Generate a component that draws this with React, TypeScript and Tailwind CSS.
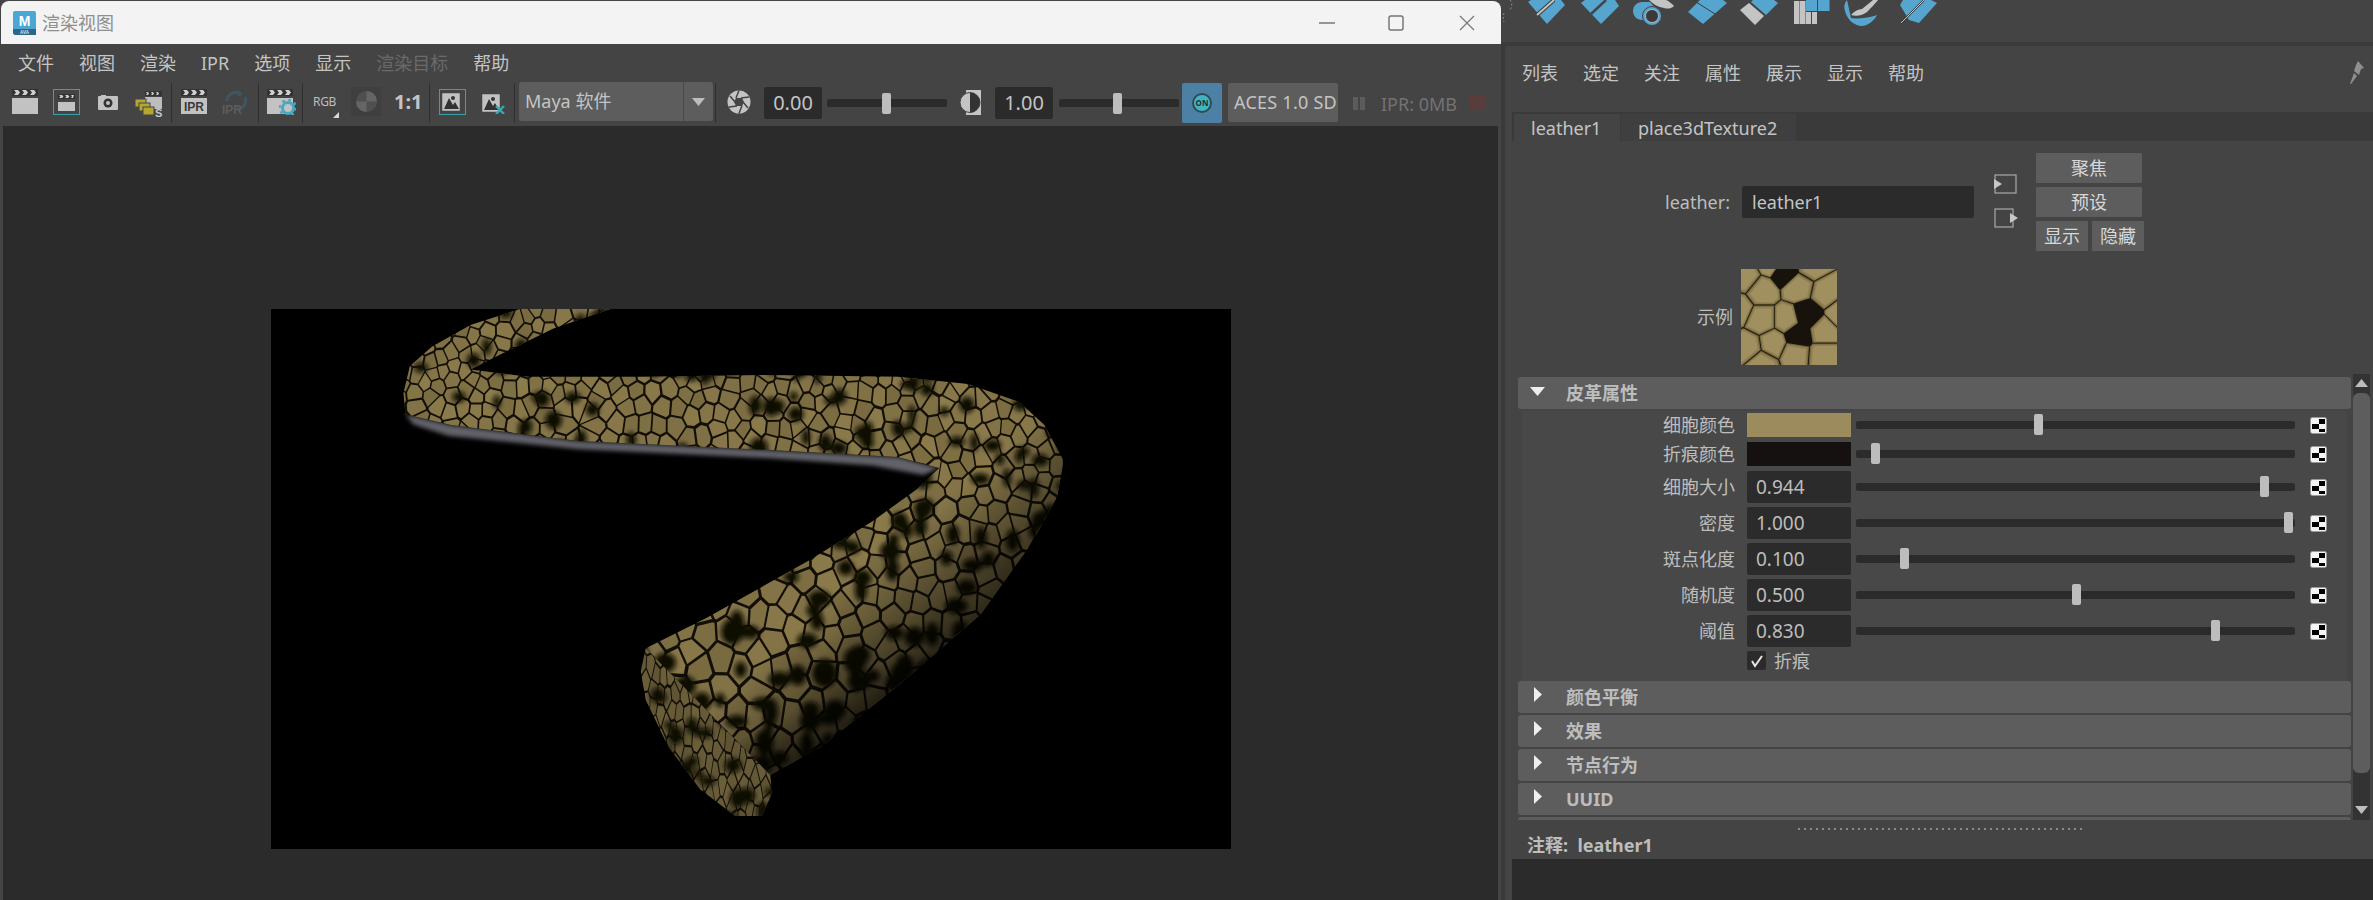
import React from "react";

type P = [number, number];

function rng(seed: number) {
  let s = seed >>> 0;
  return () => {
    s = (s + 0x6d2b79f5) >>> 0;
    let t = s;
    t = Math.imul(t ^ (t >>> 15), t | 1);
    t ^= t + Math.imul(t ^ (t >>> 7), t | 61);
    return ((t ^ (t >>> 14)) >>> 0) / 4294967296;
  };
}

function clipHalf(poly: P[], a: P, b: P): P[] {
  const mx = (a[0] + b[0]) / 2, my = (a[1] + b[1]) / 2;
  const nx = b[0] - a[0], ny = b[1] - a[1];
  const out: P[] = [];
  for (let i = 0; i < poly.length; i++) {
    const p = poly[i], q = poly[(i + 1) % poly.length];
    const dp = (p[0] - mx) * nx + (p[1] - my) * ny;
    const dq = (q[0] - mx) * nx + (q[1] - my) * ny;
    if (dp <= 0) out.push(p);
    if ((dp < 0 && dq > 0) || (dp > 0 && dq < 0)) {
      const t = dp / (dp - dq);
      out.push([p[0] + (q[0] - p[0]) * t, p[1] + (q[1] - p[1]) * t]);
    }
  }
  return out;
}

function voronoi(pts: P[], box: [number, number, number, number], reach: number): P[][] {
  return pts.map((p) => {
    let poly: P[] = [[box[0], box[1]], [box[2], box[1]], [box[2], box[3]], [box[0], box[3]]];
    for (const q of pts) {
      if (q === p) continue;
      if (Math.abs(q[0] - p[0]) > reach || Math.abs(q[1] - p[1]) > reach) continue;
      poly = clipHalf(poly, p, q);
      if (poly.length === 0) break;
    }
    return poly;
  });
}

const z = (x: number, y: number): P => [x / 1.568 - 11, y / 2.8 - 9];
const toStr = (pts: P[]) => pts.map((p) => `${p[0].toFixed(1)},${p[1].toFixed(1)}`).join(" ");

const BODY: P[] = [
  z(550, 25), z(460, 80), z(380, 150), z(330, 195), z(420, 215), z(600, 215), z(800, 210), z(1000, 215),
  z(1110, 235), z(1190, 285), z(1230, 350), z(1260, 450), z(1250, 550), z(1210, 680), z(1130, 880),
  z(1000, 1080), z(880, 1250), z(800, 1330), z(605, 975), z(700, 890), z(860, 730), z(960, 620),
  z(1030, 530), z(1065, 470), z(1000, 440), z(800, 420), z(500, 395), z(300, 350), z(228, 320),
  z(225, 260), z(235, 185), z(270, 130), z(330, 70), z(408, 25),
];
const CAP: P[] = [
  z(605, 975), z(800, 1330), z(803, 1380), z(787, 1445), z(745, 1445), z(690, 1370), z(640, 1250),
  z(605, 1120), z(597, 1040),
];
const GREY: P[] = [
  z(228, 320), z(240, 348), z(295, 380), z(500, 418), z(800, 443), z(960, 463), z(1040, 490),
  z(1065, 470), z(1000, 440), z(800, 420), z(500, 395), z(300, 350),
];

type Cell = { pts: string; fill: string };
type Blob = { cx: number; cy: number; rx: number; ry: number };

function makeCells(seed: number, box: [number, number, number, number], warpX: number, warpY: number, size: (x: number, y: number) => number, tries: number, tone: number): Cell[] {
  const r = rng(seed);
  const pts: P[] = [];
  for (let k = 0; k < tries; k++) {
    const x = box[0] + r() * (box[2] - box[0]);
    const y = box[1] + r() * (box[3] - box[1]);
    const s = size(x, y);
    let ok = true;
    for (const q of pts) {
      const dx = (q[0] - x) / warpX, dy = (q[1] - y) / warpY;
      if (dx * dx + dy * dy < s * s) { ok = false; break; }
    }
    if (ok) pts.push([x, y]);
  }
  const warped: P[] = pts.map((p) => [p[0] / warpX, p[1] / warpY]);
  const polys = voronoi(warped, [box[0] / warpX - 5, box[1] / warpY - 5, box[2] / warpX + 5, box[3] / warpY + 5], 70);
  return polys.map((poly, i) => {
    const shrink = 0.9 - r() * 0.04;
    const b = tone * (0.9 + r() * 0.14);
    let cx = 0, cy = 0;
    poly.forEach((v) => { cx += v[0]; cy += v[1]; });
    cx /= poly.length || 1; cy /= poly.length || 1;
    const out: P[] = poly.map((v) => [(cx + (v[0] - cx) * shrink) * warpX, (cy + (v[1] - cy) * shrink) * warpY]);
    const c = (v: number) => Math.round(v * b);
    return { pts: toStr(out), fill: `rgb(${c(134)},${c(118)},${c(72)})` };
  });
}

function makeBlobs(seed: number, box: [number, number, number, number], count: number, scale: (y: number) => number): Blob[] {
  const r = rng(seed);
  const out: Blob[] = [];
  for (let i = 0; i < count; i++) {
    const x = box[0] + r() * (box[2] - box[0]);
    const y = box[1] + r() * (box[3] - box[1]);
    const s = scale(y);
    out.push({ cx: x, cy: y, rx: s * (3.5 + r() * 5), ry: s * (4 + r() * 6) });
  }
  return out;
}

const sizeAt = (y: number) => 0.9 + 0.6 * Math.min(1, Math.max(0, (y - 60) / 320));

const bodyCells = makeCells(7, [60, 0, 800, 490], 1, 1.18, (x, y) => {
  const t = Math.min(1, Math.max(0, (y - 60) / 320));
  return 9.5 + t * 6.5;
}, 10000, 1);
const capCells = makeCells(19, [360, 330, 510, 520], 0.62, 1.5, () => 9.5, 3000, 0.78);
const bodyBlobs = makeBlobs(31, [60, 0, 800, 490], 420, sizeAt);
const capBlobs = makeBlobs(43, [360, 330, 510, 520], 50, () => 1);

const SWATCH_PTS: P[] = [[21, 21], [57, 18], [85, 24], [21, 51], [46, 51], [82, 62], [5, 8], [32, 74], [7, 78], [82, 86], [54, 84], [21, 95], [43, 3], [57, 66], [66, 46], [30, -6], [70, -4], [-4, 40], [100, 44]];
const DARK_SW = [12, 13, 14];
const swatchCells = voronoi(SWATCH_PTS, [-12, -12, 108, 108], 300);

function Snake() {
  return (
    <svg width="960" height="540" viewBox="0 0 960 540" className="block bg-black">
      <defs>
        <clipPath id="bodyClip"><polygon points={toStr(BODY)} /></clipPath>
        <clipPath id="capClip"><polygon points={toStr(CAP)} /></clipPath>
        <linearGradient id="fade" gradientUnits="userSpaceOnUse" x1="571" y1="282" x2="650" y2="372">
          <stop offset="0" stopColor="#000" stopOpacity="0" />
          <stop offset="1" stopColor="#000" stopOpacity="0.72" />
        </linearGradient>
        <linearGradient id="fadeLow" gradientUnits="userSpaceOnUse" x1="440" y1="330" x2="520" y2="480">
          <stop offset="0.6" stopColor="#000" stopOpacity="0" />
          <stop offset="1" stopColor="#000" stopOpacity="0.5" />
        </linearGradient>
        <filter id="soft"><feGaussianBlur stdDeviation="0.5" /></filter>
        <filter id="soft2"><feGaussianBlur stdDeviation="2" /></filter>
        <filter id="soft3"><feGaussianBlur stdDeviation="2.4" /></filter>
      </defs>
      <polygon points={toStr(GREY)} fill="#62626b" filter="url(#soft2)" />
      <g clipPath="url(#bodyClip)">
        <rect width="960" height="540" fill="#130f07" />
        <g filter="url(#soft)">
          {bodyCells.map((c, i) => <polygon key={i} points={c.pts} fill={c.fill} />)}
        </g>
        <g filter="url(#soft3)" fill="#0b0804">
          {bodyBlobs.map((b, i) => <ellipse key={i} cx={b.cx} cy={b.cy} rx={b.rx} ry={b.ry} />)}
        </g>
        <rect width="960" height="540" fill="url(#fade)" />
        <rect width="960" height="540" fill="url(#fadeLow)" />
      </g>
      <g clipPath="url(#capClip)">
        <rect width="960" height="540" fill="#130f07" />
        <g filter="url(#soft)">
          {capCells.map((c, i) => <polygon key={i} points={c.pts} fill={c.fill} />)}
        </g>
        <g filter="url(#soft3)" fill="#0b0804">
          {capBlobs.map((b, i) => <ellipse key={i} cx={b.cx} cy={b.cy} rx={b.rx} ry={b.ry} />)}
        </g>
      </g>
    </svg>
  );
}

function SwatchImage() {
  return (
    <svg width="96" height="96" viewBox="0 0 96 96" className="block">
      <defs>
        <filter id="swsoft"><feGaussianBlur stdDeviation="0.5" /></filter>
      </defs>
      <rect width="96" height="96" fill="#17120b" />
      <g filter="url(#swsoft)">
        {swatchCells.map((poly, i) => {
          if (DARK_SW.includes(i) || poly.length === 0) return null;
          let cx = 0, cy = 0;
          poly.forEach((v) => { cx += v[0]; cy += v[1]; });
          cx /= poly.length; cy /= poly.length;
          const mk = (s: number) => toStr(poly.map((v) => [cx + (v[0] - cx) * s, cy + (v[1] - cy) * s] as P));
          return (
            <g key={i}>
              <polygon points={mk(0.97)} fill="#6f6238" />
              <polygon points={mk(0.9)} fill="#8f7f52" />
              <polygon points={mk(0.78)} fill="#a09060" />
            </g>
          );
        })}
      </g>
    </svg>
  );
}

function Clapper({ ipr, gear }: { ipr?: boolean; gear?: boolean }) {
  return (
    <svg width="29" height="26" viewBox="0 0 29 26">
      <rect x="0" y="0" width="26" height="7" fill="#333" />
      <path d="M2 1h4l2 2.5L6 6H2l2-2.5zM10 1h4l2 2.5L14 6h-4l2-2.5zM18 1h4l2 2.5L22 6h-4l2-2.5z" fill="#cfcfcf" />
      <rect x="0" y="9" width="26" height="16" fill="#c2c2c2" />
      {ipr && <text x="13" y="22" textAnchor="middle" fontSize="12" fontWeight="700" fontFamily="Liberation Sans" fill="#3a3a3a">IPR</text>}
      {gear && (
        <g>
          <circle cx="21" cy="19" r="5.5" fill="none" stroke="#4aa8c0" strokeWidth="3" />
          <circle cx="21" cy="19" r="8" fill="none" stroke="#4aa8c0" strokeWidth="2.4" strokeDasharray="2.6 3.7" />
        </g>
      )}
    </svg>
  );
}

function SmallClapper() {
  return (
    <svg width="17" height="17" viewBox="0 0 17 17">
      <rect x="0" y="0" width="17" height="5" fill="#333" />
      <path d="M1 1h3l1.500 1.500L4 4H1l1.500-1.500zM7 1h3l1.500 1.500L10 4H7l1.500-1.500zM13 1h3l-1 3h-2l1-1.500z" fill="#cfcfcf" />
      <rect x="0" y="8" width="17" height="9" fill="#c2c2c2" />
    </svg>
  );
}

function Snap() {
  return (
    <svg width="30" height="32" viewBox="0 0 30 32">
      <rect x="10" y="0" width="17" height="5" fill="#333" />
      <path d="M11 1h2l1 1.500L13 4h-2l1-1.500zM16 1h2l1 1.500L18 4h-2l1-1.500zM21 1h2l1 1.500L23 4h-2l1-1.500z" fill="#c8c8c8" />
      <rect x="10" y="6" width="17" height="12" fill="#bdbdbd" />
      <rect x="0" y="8" width="11" height="8" fill="#b5a533" stroke="#444" />
      <rect x="4" y="12" width="11" height="8" fill="#b5a533" stroke="#444" />
      <rect x="8" y="16" width="11" height="8" fill="#b5a533" stroke="#444" />
      <text x="20" y="26" fontSize="11" fontWeight="700" fontFamily="Liberation Sans" fill="#c8c8c8">S</text>
    </svg>
  );
}

function Picture({ x }: { x?: boolean }) {
  return (
    <svg width="24" height="21" viewBox="0 0 24 21">
      <rect x="1" y="1" width="18" height="18" fill="#c2c2c2" stroke="#444" strokeWidth="0.5" />
      <circle cx="12" cy="6" r="2" fill="#333" />
      <path d="M3 17l5-11 4 7 2-3 4 7z" fill="#333" />
      {x && <path d="M15 13l8 8M23 13l-8 8" stroke="#3aa8b4" strokeWidth="2.400" />}
    </svg>
  );
}

function ShelfIcons() {
  return (
    <svg width="450" height="30" viewBox="0 0 450 30" className="block">
      <path d="M9 0c3 3 2 8-1 11M3 13c-1 3-1 6 0 9" fill="none" stroke="#8c8c8c" strokeWidth="1" strokeDasharray="2 2" />
      <polygon points="27,2 30,0 60,0 64,5 46,24" fill="#55a5cf" />
      <path d="M36 15L53 0" stroke="#3a3a3a" strokeWidth="4" />
      <path d="M36 15L53 0" stroke="#c4c4c4" strokeWidth="2" />
      <polygon points="80,3 84,0 114,0 118,6 100,24" fill="#55a5cf" />
      <path d="M90 14L105 0" stroke="#444" strokeWidth="2.500" />
      <path d="M148 0h17c3 1 6 4 8 6-3 3-7 3-10 2-6-1-11-4-15-8z" fill="#c4c4c4" />
      <path d="M141 2c-5 0-9 4-9 9s4 9 9 9h8l8-9-8-9z" fill="#55a5cf" />
      <circle cx="151" cy="16" r="9.500" fill="#55a5cf" stroke="#444" strokeWidth="1" />
      <circle cx="151" cy="16" r="6.500" fill="#3a3a3a" stroke="#c4c4c4" strokeWidth="0.800" />
      <polygon points="187,12 199,0 222,0 226,3 202,24" fill="#55a5cf" />
      <path d="M192 0l22 14" stroke="#3a3a3a" strokeWidth="1" />
      <polygon points="239,10 248,3 263,16 254,25" fill="#c4c4c4" />
      <polygon points="250,2 252,0 273,0 277,3 265,15" fill="#55a5cf" />
      <path d="M293 1h5.500v23H293zM299 1h5.500v23H299zM305 12h5v12h-5zM311 12h5v12h-5z" fill="#c4c4c4" />
      <path d="M305 0h11v11h-11zM317 0h11.500v11H317z" fill="#55a5cf" />
      <path d="M346 0c-3 3-3 8-2 11 2 8 8 14 16 15 7 0 13-5 16-11-8 3-20 4-26 3l-4-18z" fill="#55a5cf" />
      <path d="M350 15c3-4 8-6 11-6l11-9h5c-2 3-9 10-11 12-4 3-10 5-16 3z" fill="#c4c4c4" />
      <polygon points="399,5 402,0 430,0 436,3 418,23 408,20" fill="#55a5cf" />
      <path d="M400 23L423 0" stroke="#3a3a3a" strokeWidth="2" />
      <path d="M400 23L423 0" stroke="#c4c4c4" strokeWidth="1" />
    </svg>
  );
}

function Checker() {
  return (
    <svg width="17" height="17" viewBox="0 0 17 17" className="block shrink-0">
      <rect x="0.500" y="0.500" width="16" height="16" rx="2" fill="#f4f4f4" stroke="#9a9a9a" />
      <rect x="9" y="2" width="6" height="5" fill="#000" />
      <rect x="2" y="7" width="7" height="5" fill="#000" />
      <rect x="9" y="12" width="6" height="3" fill="#000" />
    </svg>
  );
}

function Sep({ className }: { className: string }) {
  return <div className={`w-px h-[40px] mt-px bg-[#2f2f2f] shrink-0 ${className}`} />;
}

function ToolSlider({ thumb, className }: { thumb: number; className: string }) {
  return (
    <div className={`relative h-[8px] w-[120px] mt-[17px] rounded-[2px] bg-[#2b2b2b] shrink-0 ${className}`}>
      <div className="absolute top-[-6px] w-[9px] h-[21px] rounded-[2px] bg-[#bdbdbd]" style={{ left: thumb - 4 }} />
    </div>
  );
}

const ROWS: { label: string; color?: string; value?: string; thumb: number }[] = [
  { label: "细胞颜色", color: "#9c8b5c", thumb: 182 },
  { label: "折痕颜色", color: "#151111", thumb: 19 },
  { label: "细胞大小", value: "0.944", thumb: 408 },
  { label: "密度", value: "1.000", thumb: 432 },
  { label: "斑点化度", value: "0.100", thumb: 48 },
  { label: "随机度", value: "0.500", thumb: 220 },
  { label: "阈值", value: "0.830", thumb: 359 },
];

function AttrRow({ label, color, value, thumb }: { label: string; color?: string; value?: string; thumb: number }) {
  return (
    <div className={color ? "flex items-center h-[24px] mb-[5px]" : "flex items-center h-[32px] mb-[4px]"}>
      <div className="w-[213px] text-right text-[18px] leading-[24px] text-[#bdbdbd]">{label}</div>
      {color ? (
        <div className="ml-[12px] w-[104px] h-[24px]" style={{ background: color }} />
      ) : (
        <div className="ml-[12px] w-[104px] h-[32px] rounded-[2px] bg-[#2b2b2b] pl-[9px] text-[19px] leading-[32px] text-[#bdbdbd]">{value}</div>
      )}
      <div className="relative ml-[5px] w-[439px] h-[8px] rounded-[2px] bg-[#2b2b2b]">
        <div className="absolute top-[-7px] w-[9px] h-[21px] rounded-[2px] bg-[#bdbdbd]" style={{ left: thumb - 4 }} />
      </div>
      <div className="ml-[15px]"><Checker /></div>
    </div>
  );
}

function SectionHeader({ title, open, className }: { title: string; open?: boolean; className?: string }) {
  return (
    <div className={`flex items-center h-[32px] rounded-[3px] bg-[#5d5d5d] ${className ?? ""}`}>
      <div className="w-[48px] h-full relative shrink-0">
        {open ? (
          <svg width="15" height="9" viewBox="0 0 15 9" className="absolute left-[12px] top-[10px]"><path d="M0 0h15L7.500 9z" fill="#eeeeee" /></svg>
        ) : (
          <svg width="8" height="15" viewBox="0 0 8 15" className="absolute left-[16px] top-[6px]"><path d="M0 0l8 7.500L0 15z" fill="#eeeeee" /></svg>
        )}
      </div>
      <div className="text-[18px] leading-[24px] font-bold text-[#bdbdbd]">{title}</div>
    </div>
  );
}

function PanelButton({ children, className }: { children: React.ReactNode; className: string }) {
  return <div className={`flex items-center justify-center h-[30px] rounded-[1px] bg-[#5d5d5d] text-[18px] leading-[24px] text-[#d8d8d8] ${className}`}>{children}</div>;
}

export default function App() {
  return (
    <div className="flex w-[2373px] h-[900px] overflow-hidden bg-[#444444] font-['Noto_Sans','Noto_Sans_CJK_SC',sans-serif]">
      {/* Render view window */}
      <div className="flex flex-col w-[1500px] h-[899px] mt-px ml-px shrink-0 rounded-t-[8px] overflow-hidden bg-[#444444]">
        <div className="flex items-center h-[43px] bg-[#f3f3f3] shrink-0">
          <svg width="23" height="24" viewBox="0 0 23 24" className="ml-[12px] shrink-0">
            <path d="M2 0h19a2 2 0 0 1 2 2v22H3a3 3 0 0 1-3-3V2a2 2 0 0 1 2-2z" fill="#4aa7d3" />
            <path d="M0 18h23v6H3a3 3 0 0 1-3-3z" fill="#2c6787" />
            <text x="11.500" y="14.500" textAnchor="middle" fontSize="14" fontWeight="700" fontFamily="Liberation Sans" fill="#fff">M</text>
            <text x="11.500" y="23" textAnchor="middle" fontSize="4.500" fontWeight="700" fontFamily="Liberation Sans" fill="#cfe3ee">AVA</text>
          </svg>
          <div className="ml-[6px] text-[18px] leading-[24px] text-[#8f8f8f]">渲染视图</div>
          <svg width="16" height="2" viewBox="0 0 16 2" className="ml-[1205px] shrink-0"><path d="M0 1h16" stroke="#777" strokeWidth="1.500" /></svg>
          <svg width="16" height="16" viewBox="0 0 16 16" className="ml-[53px] shrink-0"><rect x="1" y="1" width="14" height="14" rx="2" fill="none" stroke="#777" strokeWidth="1.500" /></svg>
          <svg width="16" height="16" viewBox="0 0 16 16" className="ml-[55px] shrink-0"><path d="M1 1l14 14M15 1L1 15" stroke="#777" strokeWidth="1.200" /></svg>
        </div>
        <div className="flex items-center gap-[25px] h-[38px] pl-[17px] text-[18px] leading-[24px] text-[#c4c4c4] shrink-0">
          <span>文件</span><span>视图</span><span>渲染</span><span>IPR</span><span>选项</span><span>显示</span>
          <span className="text-[#6a6a6a]">渲染目标</span><span>帮助</span>
        </div>
        <div className="flex items-start h-[44px] shrink-0">
          <div className="ml-[11px] mt-[7px] shrink-0"><Clapper /></div>
          <div className="ml-[12px] mt-[7px] w-[27px] h-[26px] border border-[#3aa0ab] flex items-center justify-center shrink-0"><SmallClapper /></div>
          <svg width="20" height="15" viewBox="0 0 20 15" className="ml-[18px] mt-[13px] shrink-0">
            <rect x="0" y="1" width="20" height="14" rx="1" fill="#c2c2c2" />
            <rect x="3" y="0" width="5" height="2" fill="#c2c2c2" />
            <circle cx="10" cy="8" r="4.500" fill="#333" />
            <circle cx="10" cy="8" r="2" fill="#c2c2c2" />
          </svg>
          <div className="w-[28px] ml-[17px] mt-[9px] shrink-0"><Snap /></div>
          <Sep className="ml-[8px]" />
          <div className="ml-[9px] mt-[7px] shrink-0"><Clapper ipr /></div>
          <svg width="25" height="32" viewBox="0 0 25 32" className="ml-[12px] mt-[7px] shrink-0">
            <path d="M5 12a9 9 0 0 1 14-7M23 8a9 9 0 0 1-5 12" fill="none" stroke="#3f5661" strokeWidth="3" />
            <path d="M17 1l4 5-6 1zM19 22l-6-2 5-3z" fill="#3f5661" />
            <text x="0" y="25" fontSize="12" fontWeight="700" fontFamily="Liberation Sans" fill="#5c5c5c">IPR</text>
          </svg>
          <Sep className="ml-[11px]" />
          <div className="ml-[8px] mt-[7px] shrink-0"><Clapper gear /></div>
          <Sep className="ml-[6px]" />
          <div className="relative ml-[10px] mt-[13px] w-[26px] h-[24px] shrink-0 text-[12px] leading-[14px] tracking-[-0.3px] text-[#bdbdbd]">
            RGB
            <svg width="6" height="6" viewBox="0 0 6 6" className="absolute right-0 bottom-[1px]"><path d="M6 0v6H0z" fill="#d8d8d8" /></svg>
          </div>
          <div className="ml-[12px] mt-[5px] w-[30px] h-[29px] bg-[#3f3f3f] flex items-center justify-center shrink-0">
            <svg width="21" height="21" viewBox="0 0 22 22"><circle cx="11" cy="11" r="11" fill="#4f4f4f" /><path d="M11 0a11 11 0 0 1 11 11H11zM11 11H0a11 11 0 0 0 11 11z" fill="#656565" /></svg>
          </div>
          <div className="ml-[13px] mt-[7px] w-[26px] text-[20px] leading-[26px] font-bold text-[#c4c4c4] shrink-0">1:1</div>
          <Sep className="ml-[9px]" />
          <div className="ml-[9px] mt-[7px] w-[27px] h-[26px] border border-[#3aa0ab] flex items-center justify-center shrink-0 overflow-hidden"><Picture /></div>
          <div className="ml-[15px] mt-[11px] shrink-0"><Picture x /></div>
          <Sep className="ml-[9px]" />
          <div className="flex ml-[4px] w-[194px] h-[39px] rounded-[3px] bg-[#5d5d5d] shrink-0">
            <div className="flex-1 pl-[6px] text-[18px] leading-[39px] text-[#c4c4c4]">Maya 软件</div>
            <div className="w-px bg-[#4a4a4a]" />
            <div className="w-[29px] flex items-center justify-center">
              <svg width="13" height="8" viewBox="0 0 13 8"><path d="M0 0h13L6.500 8z" fill="#bdbdbd" /></svg>
            </div>
          </div>
          <Sep className="ml-[2px]" />
          <svg width="24" height="26" viewBox="0 0 24 26" className="ml-[11px] mt-[7px] shrink-0">
            <circle cx="12" cy="13" r="11.500" fill="#c4c4c4" />
            <path d="M12 1.500L9 9M22 8l-8 1M21 19l-5-6M12 24.500l3-8M2 18l8-1M3 7l5 6" stroke="#444" strokeWidth="1.500" />
            <polygon points="9,9 15,9 17,13 15,17 9,17 7,13" fill="#444" />
          </svg>
          <div className="ml-[13px] mt-[5px] w-[58px] h-[32px] rounded-[2px] bg-[#2b2b2b] text-center text-[20px] leading-[32px] text-[#c4c4c4] shrink-0">0.00</div>
          <ToolSlider thumb={59} className="ml-[5px]" />
          <svg width="22" height="25" viewBox="0 0 22 25" className="ml-[12px] mt-[8px] shrink-0">
            <rect x="7" y="0" width="15" height="25" fill="#c4c4c4" />
            <circle cx="11" cy="12.500" r="10" fill="#c4c4c4" stroke="#444" strokeWidth="1" />
            <path d="M11 2.500a10 10 0 0 1 0 20z" fill="#333" />
          </svg>
          <div className="ml-[14px] mt-[5px] w-[58px] h-[32px] rounded-[2px] bg-[#2b2b2b] text-center text-[20px] leading-[32px] text-[#c4c4c4] shrink-0">1.00</div>
          <ToolSlider thumb={58} className="ml-[6px]" />
          <div className="ml-[3px] mt-px w-[40px] h-[40px] rounded-[2px] bg-[#4c80a5] flex items-center justify-center shrink-0">
            <div className="w-[20px] h-[20px] rounded-full bg-[#43b4bf] border-2 border-[#2f4a55] flex items-center justify-center text-[8px] leading-none font-bold text-[#1f2f35]">ON</div>
          </div>
          <div className="ml-[6px] mt-px w-[110px] h-[39px] rounded-[2px] bg-[#5d5d5d] pl-[6px] text-[18px] tracking-[0.25px] leading-[39px] whitespace-nowrap text-[#c4c4c4] shrink-0">ACES 1.0 SD</div>
          <div className="flex gap-[2px] ml-[15px] mt-[15px] shrink-0">
            <div className="w-[5px] h-[13px] bg-[#5c5c5c]" />
            <div className="w-[5px] h-[13px] bg-[#5c5c5c]" />
          </div>
          <div className="ml-[16px] mt-[10px] text-[18px] leading-[24px] whitespace-nowrap text-[#727272] shrink-0">IPR: 0MB</div>
          <div className="ml-[13px] mt-[14px] w-[16px] h-[14px] bg-[#5a3c3c] shrink-0" />
        </div>
        <div className="flex-1 ml-[2px] mr-[3px] pl-[268px] pt-[183px] bg-[#2b2b2b] overflow-hidden">
          <Snake />
        </div>
      </div>

      {/* Attribute editor */}
      <div className="flex flex-col flex-1 min-w-0 h-[900px]">
        <div className="h-[42px] shrink-0"><ShelfIcons /></div>
        <div className="h-[4px] bg-[#3b3b3b] shrink-0" />
        <div className="flex flex-1 min-h-0">
          <div className="w-[4px] bg-[#3a3a3a] shrink-0" />
          <div className="flex flex-col flex-1 min-w-0">
            <div className="flex items-center h-[66px] pl-[17px] pb-[12px] shrink-0">
              <div className="flex gap-[25px] text-[18px] leading-[24px] text-[#c4c4c4]">
                <span>列表</span><span>选定</span><span>关注</span><span>属性</span><span>展示</span><span>显示</span><span>帮助</span>
              </div>
              <svg width="16" height="24" viewBox="0 0 16 24" className="ml-auto mr-[8px]">
                <path d="M9 0l6 7-3 1-2 6-5-4 2-6zM5 12L1 23l1 0 6-8z" fill="#8f8f8f" />
              </svg>
            </div>
            <div className="flex items-end h-[29px] ml-[7px] bg-[#3a3a3a] shrink-0">
              <div className="flex items-center w-[106px] h-[27px] ml-[2px] pl-[17px] bg-[#444444] rounded-t-[2px] text-[18px] leading-[24px] text-[#c4c4c4]">leather1</div>
              <div className="flex items-center w-[175px] h-[27px] ml-px pl-[17px] bg-[#3f3f3f] rounded-t-[2px] text-[18px] leading-[24px] text-[#c4c4c4]">place3dTexture2</div>
            </div>
            <div className="h-[128px] flex items-start pt-[12px] shrink-0">
              <div className="w-[225px] mt-[33px] h-[32px] text-right text-[18px] leading-[32px] text-[#bdbdbd]">leather:</div>
              <div className="ml-[12px] mt-[33px] w-[232px] h-[32px] rounded-[2px] bg-[#2b2b2b] pl-[10px] text-[18px] leading-[32px] text-[#c4c4c4]">leather1</div>
              <div className="ml-[20px] mt-[21px] w-[23px] shrink-0">
                <svg width="24" height="20" viewBox="0 0 24 20" className="block"><rect x="1" y="1" width="21" height="18" fill="none" stroke="#a8a8a8" strokeWidth="1.200" /><path d="M0 5l8 5-8 5z" fill="#c8c8c8" /></svg>
                <svg width="24" height="20" viewBox="0 0 24 20" className="block mt-[14px]"><rect x="1" y="1" width="18" height="18" fill="none" stroke="#a8a8a8" strokeWidth="1.200" /><path d="M16 5l8 5-8 5z" fill="#c8c8c8" /></svg>
              </div>
              <div className="ml-[19px] flex flex-col gap-[4px]">
                <PanelButton className="w-[106px]">聚焦</PanelButton>
                <PanelButton className="w-[106px]">预设</PanelButton>
                <div className="flex gap-[4px]">
                  <PanelButton className="w-[52px]">显示</PanelButton>
                  <PanelButton className="w-[52px]">隐藏</PanelButton>
                </div>
              </div>
            </div>
            <div className="flex items-center h-[96px] shrink-0">
              <div className="w-[228px] text-right text-[18px] leading-[24px] text-[#bdbdbd]">示例</div>
              <div className="ml-[8px]"><SwatchImage /></div>
            </div>
            <div className="flex h-[446px] mt-[9px] shrink-0">
              <div className="w-[833px] ml-[13px] overflow-hidden pt-[3px] shrink-0">
                <SectionHeader title="皮革属性" open />
                <div className="mx-[4px] mt-[2px] pt-[2px] h-[270px] bg-[#484848]">
                  {ROWS.map((r) => <AttrRow key={r.label} {...r} />)}
                  <div className="flex items-center h-[19px] mt-[4px] ml-[225px]">
                    <div className="flex items-center justify-center w-[19px] h-[19px] rounded-[2px] bg-[#2b2b2b]">
                      <svg width="14" height="14" viewBox="0 0 14 14"><path d="M2 7l3 5 7-10" fill="none" stroke="#e8e8e8" strokeWidth="2" /></svg>
                    </div>
                    <span className="ml-[8px] text-[18px] leading-[24px] text-[#bdbdbd]">折痕</span>
                  </div>
                </div>
                <SectionHeader title="颜色平衡" />
                <SectionHeader title="效果" className="mt-[2px]" />
                <SectionHeader title="节点行为" className="mt-[2px]" />
                <SectionHeader title="UUID" className="mt-[2px]" />
                <SectionHeader title="" className="mt-[2px]" />
              </div>
              <div className="relative w-[17px] ml-[2px] bg-[#333333] shrink-0">
                <svg width="13" height="8" viewBox="0 0 13 8" className="absolute left-[2px] top-[5px]"><path d="M6.500 0L13 8H0z" fill="#bdbdbd" /></svg>
                <div className="absolute left-0 right-0 top-[19px] h-[380px] rounded-[6px] bg-[#5d5d5d]" />
                <svg width="13" height="8" viewBox="0 0 13 8" className="absolute left-[2px] bottom-[6px]"><path d="M0 0h13L6.500 8z" fill="#bdbdbd" /></svg>
              </div>
            </div>
            <div className="flex-1 flex flex-col min-h-0">
              <div className="h-[2px] mt-[8px] ml-[293px] w-[284px] bg-[repeating-linear-gradient(90deg,#8a8a8a_0_2px,transparent_2px_6px)] shrink-0" />
              <div className="h-[29px] pl-[22px] flex items-center text-[18px] leading-[24px] font-bold text-[#bdbdbd] shrink-0">注释:&nbsp;&nbsp;leather1</div>
              <div className="flex-1 ml-[7px] bg-[#2b2b2b]" />
            </div>
          </div>
        </div>
      </div>
    </div>
  );
}
